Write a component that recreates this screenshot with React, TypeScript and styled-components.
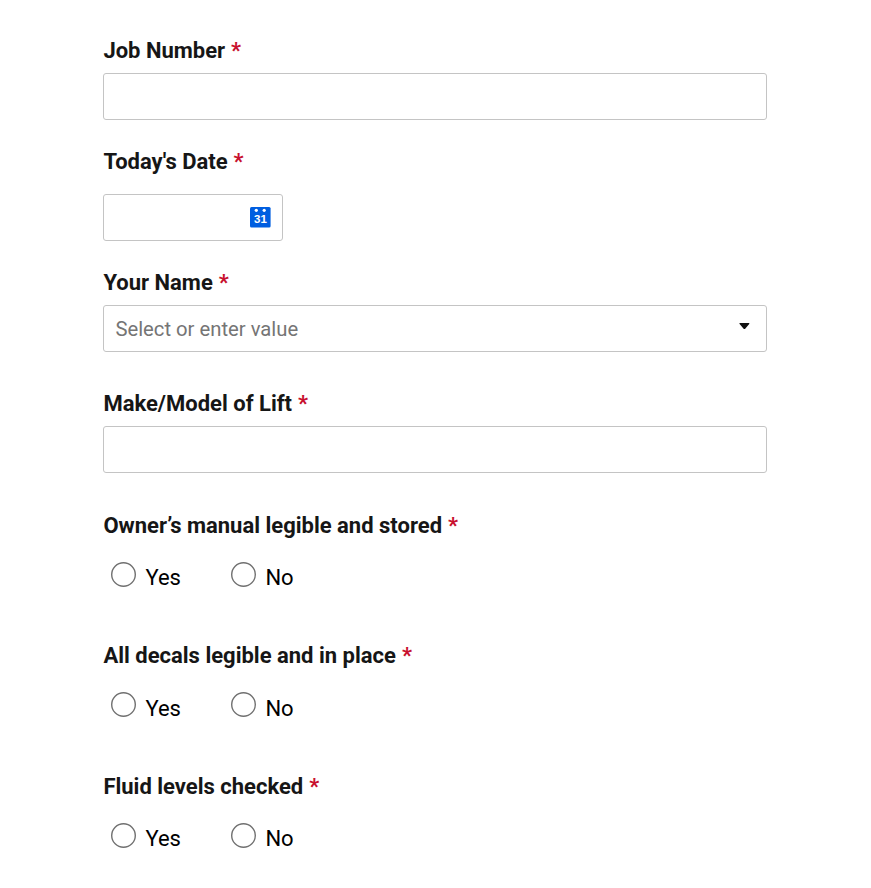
import React from "react";
import styled, { createGlobalStyle } from "styled-components";

const GlobalStyle = createGlobalStyle`
  * { box-sizing: border-box; }
  html, body { margin: 0; background: #fff; }
  body { font-family: Roboto, sans-serif; color: #111; overflow: hidden; }
`;

const Form = styled.form`
  width: 664px;
  height: 888px;
  overflow: hidden;
  margin-left: 103px;
  padding-top: 37px;
`;

const Field = styled.div<{ $height: number }>`
  height: ${(p) => p.$height}px;
`;

const Label = styled.div`
  padding-left: 0.4px;
  font-size: 22px;
  line-height: 28px;
  font-weight: 700;
  color: #161616;
  white-space: nowrap;
`;

const Required = styled.span`
  color: #c8102e;
  margin-left: 0.5px;
`;

const Box = styled.div<{ $width?: number; $gap?: number }>`
  display: flex;
  align-items: center;
  justify-content: space-between;
  width: ${(p) => (p.$width ? `${p.$width}px` : "100%")};
  height: 47px;
  margin-top: ${(p) => p.$gap ?? 8}px;
  border: 1px solid #c4c4c4;
  border-radius: 3px;
  background: #fff;
  padding: 0 11px;
`;

const Placeholder = styled.span`
  padding-left: 0.4px;
  font-size: 20.25px;
  color: #757575;
`;

const Options = styled.div`
  display: flex;
  padding: 22px 0 0 8px;
`;

const Option = styled.label`
  display: flex;
  width: 120px;
  font-size: 22px;
  line-height: 28px;
  color: #000;
`;

const RadioSvg = styled.svg`
  flex: none;
  margin-right: 9.4px;
`;

const OptionText = styled.span`
  padding-top: 2.5px;
`;

const CalendarSvg = styled.svg`
  margin: 0 0 1px;
  font-family: "Liberation Sans", sans-serif;
`;

const CaretSvg = styled.svg`
  margin: 0 5px 5px 0;
`;

const Radio = () => (
  <RadioSvg width="25" height="25" viewBox="0 0 25 25">
    <circle cx="12.5" cy="12.5" r="11.8" fill="#fff" stroke="#707070" strokeWidth="1.4" />
  </RadioSvg>
);

const CalendarIcon = () => (
  <CalendarSvg width="21" height="21" viewBox="0 0 21 21">
    <rect width="20.6" height="20.6" rx="1.5" fill="#005ee0" />
    <circle cx="6.3" cy="3.3" r="1.6" fill="#fff" />
    <circle cx="14.2" cy="3.3" r="1.6" fill="#fff" />
    <text x="10.4" y="16" textAnchor="middle" fontSize="11.5" fontWeight="700" fill="#fff">31</text>
  </CalendarSvg>
);

const Caret = () => (
  <CaretSvg width="12" height="8" viewBox="0 0 12 8">
    <path d="M1.8 1h9.2q.8.4.2 1L7.2 6.7q-.8.7-1.6 0L1.6 2q-.6-.6.2-1z" fill="#111" />
  </CaretSvg>
);

const Title = ({ text }: { text: string }) => (
  <Label>{text}<Required> *</Required></Label>
);

const YesNo = ({ text, height }: { text: string; height: number }) => (
  <Field $height={height}>
    <Title text={text} />
    <Options>
      {["Yes", "No"].map((o) => (
        <Option key={o}><Radio /><OptionText>{o}</OptionText></Option>
      ))}
    </Options>
  </Field>
);

export default function App() {
  return (
    <>
      <GlobalStyle />
      <Form>
        <Field $height={111}><Title text="Job Number" /><Box /></Field>
        <Field $height={121}>
          <Title text="Today's Date" />
          <Box $width={180} $gap={18}><span /><CalendarIcon /></Box>
        </Field>
        <Field $height={121}>
          <Title text="Your Name" />
          <Box><Placeholder>Select or enter value</Placeholder><Caret /></Box>
        </Field>
        <Field $height={121.9}><Title text="Make/Model of Lift" /><Box /></Field>
        <YesNo text="Owner’s manual legible and stored" height={130.5} />
        <YesNo text="All decals legible and in place" height={130.5} />
        <YesNo text="Fluid levels checked" height={120} />
      </Form>
    </>
  );
}
